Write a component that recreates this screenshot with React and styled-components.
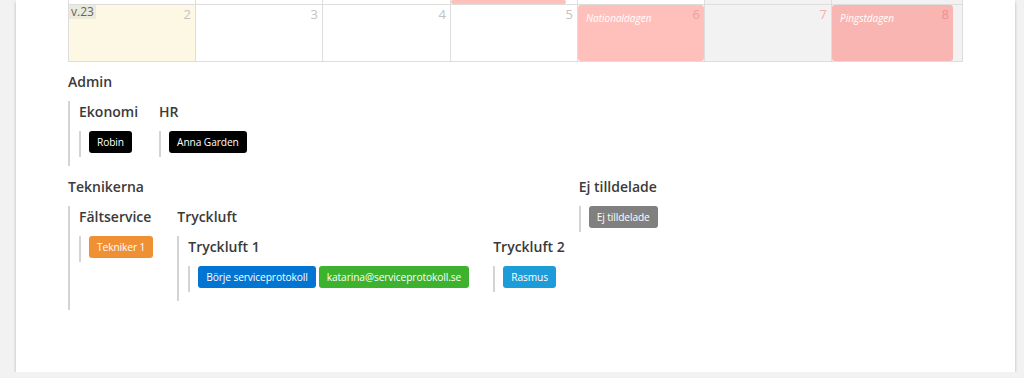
import React from 'react';
import styled, { createGlobalStyle } from 'styled-components';

const GlobalStyle = createGlobalStyle`
  html, body {
    margin: 0;
    padding: 0;
    background: #f2f2f2;
    overflow: hidden;
  }

  body {
    font-family: "Open Sans", "Liberation Sans", sans-serif;
    color: #333;
  }
`

const Card = styled.div`
  margin: 0 9px 0 16px;
  padding: 0 52px 62px;
  background: #fff;
  box-shadow: rgba(0, 0, 0, 0.25) 0px 2px 3px;
`

const Calendar = styled.div`
  display: grid;
  grid-template-columns: 127px 127px 128px 127px 127px 127px 131px;
  border-left: 1px solid #ddd;
`

const Cell = styled.div`
  display: flex;
  flex-direction: column;
  height: ${props => props.$height}px;
  background: ${props => props.$bg || '#fff'};
  border-right: 1px solid #ddd;
  border-bottom: 1px solid #ddd;
  overflow: hidden;
`

const CellHead = styled.div`
  display: flex;
  justify-content: space-between;
  align-items: flex-start;
`

const WeekNo = styled.span`
  padding: 0 2px;
  font-size: 12px;
  line-height: 14px;
  color: #666;
  background: #eceadb;
`

const DayNo = styled.span`
  margin-left: auto;
  padding: 1px 4px 0 0;
  font-size: 13px;
  line-height: 17px;
  color: ${props => props.$color || '#c2c2c2'};
`

const EventFill = styled.div`
  flex: 1;
  display: flex;
  justify-content: space-between;
  align-items: flex-start;
  margin-right: ${props => props.$gap || 0}px;
  border-radius: 3px;
  background: ${props => props.$color};
`

const EventTitle = styled.span`
  padding: 6px 0 0 8px;
  font-size: 10px;
  font-style: italic;
  line-height: 14px;
  color: #fff;
`

const Row = styled.div`
  display: flex;
  align-items: flex-start;
  gap: 14px;
  margin-top: 10px;

  & + & {
    margin-top: 11px;
  }
`

const Group = styled.div`
  display: flex;
  flex-direction: column;
  align-items: flex-start;
`

const GroupTitle = styled.h4`
  margin: 0 0 9px;
  font-size: 14px;
  font-weight: 600;
  line-height: 20px;
  color: #3a3a3a;
  white-space: nowrap;
`

const GroupBox = styled.div`
  display: flex;
  align-items: flex-start;
  gap: 21px;
  padding: 1px 0 9px 9px;
  border-left: 2px solid #d4d4d4;
`

const LeafBox = styled.div`
  display: flex;
  padding: 0 0 4px 8px;
  border-left: 2px solid #d4d4d4;
`

const Badge = styled.span`
  display: inline-flex;
  align-items: center;
  height: 22px;
  margin-right: 3px;
  padding: 0 8px;
  box-sizing: border-box;
  border-radius: 3px;
  font-size: 10.2px;
  letter-spacing: -0.1px;
  color: #fff;
  white-space: nowrap;
  background: ${props => props.$color};
`

const topRow = [
  {}, {}, {}, { event: '#ffbfbb', gap: 11 }, {}, { bg: '#f2f2f2' }, { bg: '#f2f2f2' }
]

const weekRow = [
  { day: 2, bg: '#fcf8e3', week: 'v.23' },
  { day: 3 },
  { day: 4 },
  { day: 5 },
  { day: 6, event: '#ffbfbb', title: 'Nationaldagen', color: '#e9a29e' },
  { day: 7, bg: '#f2f2f2', color: '#f2b0aa' },
  { day: 8, bg: '#f2f2f2', event: '#f9b5b1', title: 'Pingstdagen', color: '#f1908a', gap: 9 }
]

const Day = ({ day, bg, week, event, title, color, gap }) => {
  if (event) {
    return (
      <Cell $height={56} $bg={bg}>
        <EventFill $color={event} $gap={gap}>
          <EventTitle>{title}</EventTitle>
          <DayNo $color={color}>{day}</DayNo>
        </EventFill>
      </Cell>
    )
  }
  return (
    <Cell $height={56} $bg={bg}>
      <CellHead>
        {week && <WeekNo>{week}</WeekNo>}
        <DayNo $color={color}>{day}</DayNo>
      </CellHead>
    </Cell>
  )
}

const Leaf = ({ title, people }) => (
  <Group>
    <GroupTitle>{title}</GroupTitle>
    <LeafBox>
      {people.map((p, index) => (
        <Badge key={index} $color={p.color}>{p.name}</Badge>
      ))}
    </LeafBox>
  </Group>
)

const Branch = ({ title, children }) => (
  <Group>
    <GroupTitle>{title}</GroupTitle>
    <GroupBox>{children}</GroupBox>
  </Group>
)

const App = () => (
  <>
    <GlobalStyle />
    <Card>
      <Calendar>
        {topRow.map((c, index) => (
          <Cell key={'t' + index} $height={4} $bg={c.bg}>
            {c.event && <EventFill $color={c.event} $gap={c.gap} />}
          </Cell>
        ))}
        {weekRow.map((d) => <Day key={d.day} {...d} />)}
      </Calendar>

      <Row>
        <Branch title="Admin">
          <Leaf title="Ekonomi" people={[{ name: 'Robin', color: '#000' }]} />
          <Leaf title="HR" people={[{ name: 'Anna Garden', color: '#000' }]} />
        </Branch>
      </Row>

      <Row>
        <Branch title="Teknikerna">
          <Leaf title="Fältservice" people={[{ name: 'Tekniker 1', color: '#f09035' }]} />
          <Branch title="Tryckluft">
            <Leaf
              title="Tryckluft 1"
              people={[
                { name: 'Börje serviceprotokoll', color: '#0275d3' },
                { name: 'katarina@serviceprotokoll.se', color: '#3cb22e' }
              ]}
            />
            <Leaf title="Tryckluft 2" people={[{ name: 'Rasmus', color: '#1c9dd9' }]} />
          </Branch>
        </Branch>
        <Leaf title="Ej tilldelade" people={[{ name: 'Ej tilldelade', color: '#808080' }]} />
      </Row>
    </Card>
  </>
)

export default App;
